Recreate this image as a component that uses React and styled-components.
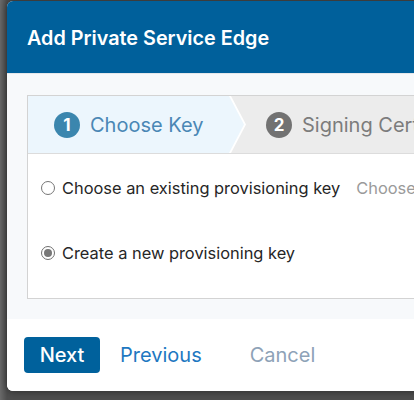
import React, { useState } from "react";
import styled, { createGlobalStyle } from "styled-components";

const GlobalStyle = createGlobalStyle`
    html, body {
        margin: 0;
        padding: 0;
        background: #5a5a5a;
        overflow: hidden;
        font-family: Inter, "Noto Sans", sans-serif;
    }
`;

function Radio({ checked, onSelect, children }) {
    return (
        <S.RadioRow onClick={onSelect}>
            <S.RadioDot checked={checked} />
            <span>{children}</span>
        </S.RadioRow>
    );
}

function App() {
    const [choice, setChoice] = useState("new");

    return (
        <>
            <GlobalStyle />
            <S.Page>
                <S.Modal>
                    <S.Header>
                        <h1>Add Private Service Edge</h1>
                    </S.Header>
                    <S.Body>
                        <S.Wizard>
                            <S.StepsBar>
                                <S.ActiveEdge>
                                    <S.ActiveStep>
                                        <S.StepNum active>1</S.StepNum>
                                        <S.StepLabel active>Choose Key</S.StepLabel>
                                    </S.ActiveStep>
                                </S.ActiveEdge>
                                <S.Step>
                                    <S.StepNum>2</S.StepNum>
                                    <S.StepLabel>Signing Certificate</S.StepLabel>
                                </S.Step>
                            </S.StepsBar>
                            <S.Content>
                                <S.OptionLine>
                                    <Radio
                                        checked={choice === "existing"}
                                        onSelect={() => setChoice("existing")}
                                    >
                                        Choose an existing provisioning key
                                    </Radio>
                                    <S.Placeholder>Choose...</S.Placeholder>
                                </S.OptionLine>
                                <S.OptionLine>
                                    <Radio
                                        checked={choice === "new"}
                                        onSelect={() => setChoice("new")}
                                    >
                                        Create a new provisioning key
                                    </Radio>
                                </S.OptionLine>
                            </S.Content>
                        </S.Wizard>
                    </S.Body>
                    <S.Footer>
                        <S.NextButton type="button">Next</S.NextButton>
                        <S.LinkButton type="button">Previous</S.LinkButton>
                        <S.LinkButton type="button" muted>
                            Cancel
                        </S.LinkButton>
                    </S.Footer>
                </S.Modal>
            </S.Page>
        </>
    );
}

const Page = styled.div`
    width: 414px;
    height: 400px;
    padding: 1px 0 0 7px;
    box-sizing: border-box;
    background: linear-gradient(90deg, #6a6a6a 0px, #4e4e4e 7px);
`;
const Modal = styled.div`
    width: 470px;
    height: 390px;
    background: #fff;
    border-radius: 6px;
    overflow: hidden;
    box-shadow: 0 0 8px rgba(0, 0, 0, 0.5);
    display: flex;
    flex-direction: column;
`;
const Header = styled.div`
    height: 72px;
    flex-shrink: 0;
    background: #00609b;
    display: flex;
    align-items: center;
    padding: 0 20px;
    & > h1 {
        margin: 0;
        margin-top: 1px;
        color: #fff;
        font-size: 19.8px;
        font-weight: 600;
    }
`;
const Body = styled.div`
    background: #f7f9fb;
    padding: 21px 0 20px 20px;
    border-top: 1px solid #e4e7ea;
`;
const Wizard = styled.div`
    border: 1px solid #d3d3d3;
    border-right: none;
    background: #fff;
`;
const StepsBar = styled.div`
    height: 57px;
    display: flex;
    align-items: stretch;
    background: #ececec;
    border-bottom: 1px solid #dcdcdc;
`;
const ActiveEdge = styled.div`
    width: 218px;
    background: #fff;
    clip-path: polygon(0 0, calc(100% - 15px) 0, 100% 50%, calc(100% - 15px) 100%, 0 100%);
    display: flex;
`;
const ActiveStep = styled.div`
    width: 216px;
    background: #ecf6fd;
    clip-path: polygon(0 0, calc(100% - 15px) 0, 100% 50%, calc(100% - 15px) 100%, 0 100%);
    display: flex;
    align-items: center;
    padding-left: 26px;
    box-sizing: border-box;
    gap: 10px;
`;
const Step = styled.div`
    display: flex;
    align-items: center;
    padding-left: 20px;
    gap: 10px;
    white-space: nowrap;
`;
const StepNum = styled.span`
    width: 26px;
    height: 26px;
    border-radius: 50%;
    background: ${(p) => (p.active ? "#3b86ae" : "#727272")};
    color: #fff;
    font-size: 17px;
    font-weight: 700;
    display: flex;
    align-items: center;
    justify-content: center;
    flex-shrink: 0;
`;
const StepLabel = styled.span`
    font-size: 20px;
    color: ${(p) => (p.active ? "#4a87b5" : "#7c7c7c")};
    white-space: nowrap;
`;
const Content = styled.div`
    height: 144px;
    padding: 22px 0 0 13px;
    box-sizing: border-box;
    display: flex;
    flex-direction: column;
    gap: 41px;
`;
const OptionLine = styled.div`
    display: flex;
    align-items: center;
    height: 24px;
    gap: 16px;
    white-space: nowrap;
`;
const RadioRow = styled.label`
    display: flex;
    align-items: center;
    gap: 7px;
    font-size: 16.4px;
    color: #262626;
    cursor: pointer;
`;
const RadioDot = styled.span`
    width: 14px;
    height: 14px;
    border-radius: 50%;
    box-sizing: border-box;
    border: 1px solid ${(p) => (p.checked ? "#6f6f6f" : "#767676")};
    background: #fff;
    position: relative;
    flex-shrink: 0;
    &::after {
        content: "";
        display: ${(p) => (p.checked ? "block" : "none")};
        position: absolute;
        inset: 2px;
        border-radius: 50%;
        background: #777;
    }
`;
const Placeholder = styled.span`
    font-size: 16.4px;
    color: #9a9a9a;
`;
const Footer = styled.div`
    flex: 1;
    background: #fff;
    display: flex;
    align-items: center;
    padding: 0 0 0 17px;
    gap: 20px;
`;
const NextButton = styled.button`
    height: 36px;
    width: 76px;
    border: none;
    border-radius: 4px;
    background: #00619c;
    color: #fff;
    font-family: inherit;
    font-size: 20px;
    font-weight: 500;
    cursor: pointer;
`;
const LinkButton = styled.button`
    border: none;
    background: none;
    padding: 0;
    margin-right: 28px;
    font-family: inherit;
    font-size: 20px;
    color: ${(p) => (p.muted ? "#8ea2b7" : "#1e78c1")};
    cursor: pointer;
`;

const S = {
    Page,
    Modal,
    Header,
    Body,
    Wizard,
    StepsBar,
    ActiveEdge,
    ActiveStep,
    Step,
    StepNum,
    StepLabel,
    Content,
    OptionLine,
    RadioRow,
    RadioDot,
    Placeholder,
    Footer,
    NextButton,
    LinkButton,
};

export default App;
